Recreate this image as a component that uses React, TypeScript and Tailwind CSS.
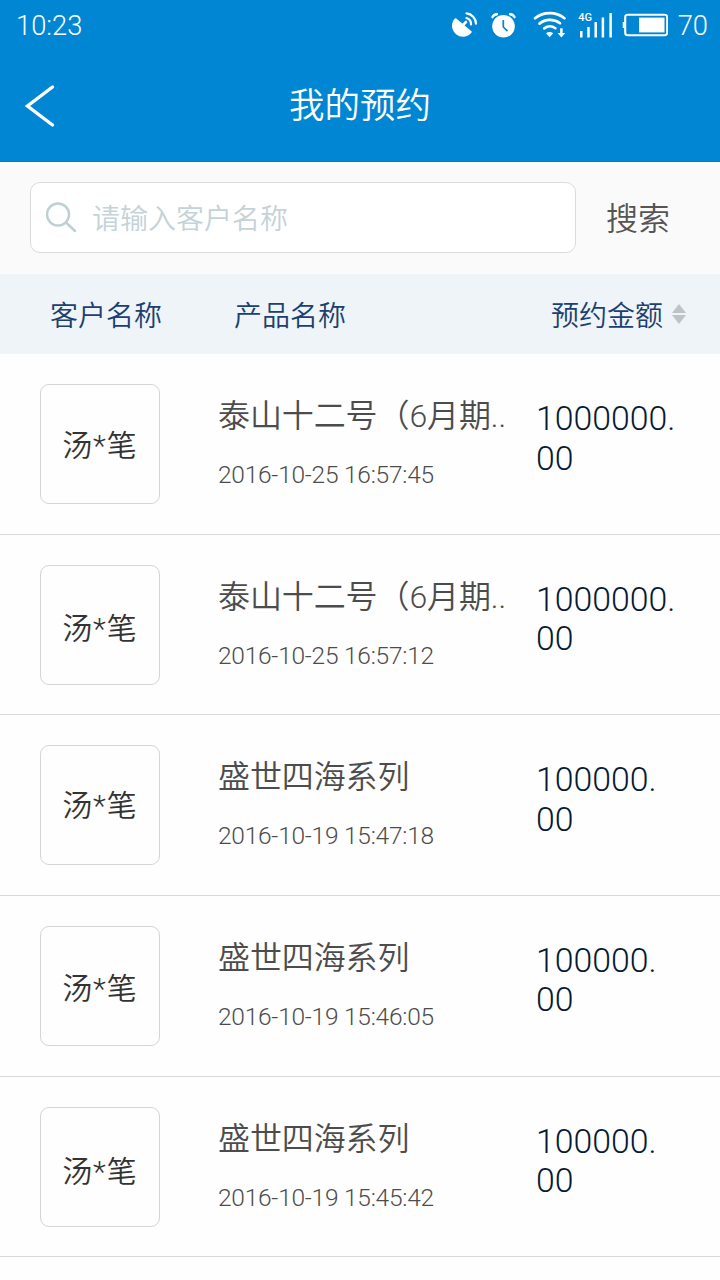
import clsx from "clsx";

interface Booking {
  customer: string;
  product: string;
  time: string;
  amount: [string, string];
  nameShift: string;
}

const bookings: Booking[] = [
  { customer: "汤*笔", product: "泰山十二号（6月期..", time: "2016-10-25 16:57:45", amount: ["1000000.", "00"], nameShift: "pt-0.5" },
  { customer: "汤*笔", product: "泰山十二号（6月期..", time: "2016-10-25 16:57:12", amount: ["1000000.", "00"], nameShift: "pt-[6px]" },
  { customer: "汤*笔", product: "盛世四海系列", time: "2016-10-19 15:47:18", amount: ["100000.", "00"], nameShift: "pt-0" },
  { customer: "汤*笔", product: "盛世四海系列", time: "2016-10-19 15:46:05", amount: ["100000.", "00"], nameShift: "pt-1" },
  { customer: "汤*笔", product: "盛世四海系列", time: "2016-10-19 15:45:42", amount: ["100000.", "00"], nameShift: "pt-2" },
];

function StatusIcons() {
  return (
    <svg width="218" height="32" viewBox="450 8 218 32" fill="none" stroke="white">
      {/* satellite dish */}
      <path d="M455.5 19.5 L470.5 32 A9.6 9.6 0 0 1 455.5 19.5Z" fill="white" strokeWidth="2.4" strokeLinejoin="round" />
      <path d="M462 26 L466 22" strokeWidth="2.6" strokeLinecap="round" />
      <path d="M466.5 18 A6.5 6.5 0 0 1 471 24.5" strokeWidth="2.2" strokeLinecap="round" />
      <path d="M466.5 13.4 A10.5 10.5 0 0 1 476 23.6" strokeWidth="2.2" strokeLinecap="round" />

      {/* alarm */}
      <circle cx="503.5" cy="26.2" r="11.3" fill="white" stroke="none" />
      <path d="M492.5 17.2 Q493.5 14.4 497 14.2 M510 14.2 Q513.5 14.4 514.5 17.2" strokeWidth="2.4" strokeLinecap="round" />
      <path d="M503.3 20 V27 L507.5 31.2" stroke="#0086d3" strokeWidth="1.7" />

      {/* wifi with data arrows */}
      <path d="M535 18.2 C543.5 11.3 556 11.3 564.5 18.2" strokeWidth="2.7" strokeLinecap="round" />
      <path d="M539.5 23.6 C545.5 18.6 554 18.6 560 23.2" strokeWidth="2.7" strokeLinecap="round" />
      <path d="M544.2 28.4 C547.8 25.7 551.8 25.7 555.4 28.2" strokeWidth="2.6" strokeLinecap="round" />
      <path d="M546 33.2 Q549.5 30.8 553.2 33.2 L549.6 37.3Z" fill="white" stroke="none" />
      <path d="M561.4 28.3 V35" strokeWidth="2.5" />
      <path d="M557.6 33 H565.2 L561.4 37.6Z" fill="white" stroke="none" />

      {/* signal */}
      <text x="578.3" y="21" fill="white" stroke="none" className="font-['Roboto'] text-[11px] font-medium">4G</text>
      <path d="M581.3 31 V37.5 M588.5 27 V37.5 M595.7 22 V37.5 M602.9 17.5 V37.5 M610.6 13 V37.5" strokeWidth="2.5" />

      {/* battery */}
      <rect x="625.2" y="14.8" width="42" height="20.4" rx="2.5" strokeWidth="2.1" />
      <path d="M623.8 22 V28" strokeWidth="2.2" />
      <rect x="639" y="17.6" width="25.5" height="14.8" fill="white" stroke="none" />
    </svg>
  );
}

function Header() {
  return (
    <header className="h-[162px] bg-[#0086d3] border-b border-[#087bbd] text-white">
      <div className="h-[52px] flex items-start justify-between pl-4 pr-3">
        <span className="pt-2.5 text-[27.3px] leading-8 font-[350]">10:23</span>
        <div className="flex items-start">
          <div className="pt-2 mr-2.5">
            <StatusIcons />
          </div>
          <span className="pt-2.5 text-[27.3px] leading-8 font-light">70</span>
        </div>
      </div>
      <div className="h-[108px] grid grid-cols-[1fr_auto_1fr] items-center">
        <svg className="ml-6" width="32" height="44" viewBox="0 0 32 44" fill="none">
          <path d="M28.5 3 L3.5 22 L28.5 41" stroke="white" strokeWidth="3.4" strokeLinecap="round" strokeLinejoin="miter" />
        </svg>
        <h1 className="text-[35.5px] leading-10 font-[350]">我的预约</h1>
      </div>
    </header>
  );
}

function SearchBar() {
  return (
    <section className="h-[112px] bg-[#fafafa] pt-5 pl-[30px] flex items-start">
      <div className="w-[546px] h-[71px] rounded-[10px] border border-[#d9dcdd] bg-white flex items-center">
        <svg className="ml-[15px]" width="32" height="32" viewBox="0 0 32 32" fill="none" stroke="#bfd0d3" strokeWidth="2.5">
          <circle cx="12" cy="12.5" r="11" />
          <path d="M20 20.5 L29 29" strokeLinecap="round" />
        </svg>
        <span className="ml-3.5 pt-1 text-[28px] leading-10 font-[350] text-[#c5d2d7]">请输入客户名称</span>
      </div>
      <button className="ml-[30px] h-[71px] pt-[3px] text-[32px] font-[350] text-[#555]">搜索</button>
    </section>
  );
}

function ColumnHeads() {
  return (
    <section className="h-20 bg-[#eef4f7] pl-[50px] flex items-center text-[28px] leading-10 font-[350] text-[#1c406f]">
      <span className="w-[184px] pt-1.5">客户名称</span>
      <span className="w-[317px] pt-1.5">产品名称</span>
      <span className="pt-1.5">预约金额</span>
      <svg className="ml-[9px]" width="14" height="20" viewBox="0 0 14 20" fill="#bdc3c6">
        <path d="M7 0 L14 9 H0Z" />
        <path d="M0 11 H14 L7 20Z" />
      </svg>
    </section>
  );
}

function BookingRow({ booking }: { booking: Booking }) {
  return (
    <li className="h-[180.67px] border-b border-[#d9d9d9] pl-10 pt-[30px] flex items-start">
      <div className={clsx("w-[120px] h-[120px] shrink-0 rounded-[9px] border border-[#d5d5d5] flex items-center justify-center", booking.nameShift)}>
        <span className="pt-0.5 text-[30px] leading-10 tracking-[1px] font-[350] text-[#333]">{booking.customer}</span>
      </div>
      <div className="ml-[58px] w-[318px] shrink-0 text-[#4c4c4c]">
        <div className="pt-3 text-[32px] leading-10 tracking-[-0.1px] font-[350] whitespace-nowrap">{booking.product}</div>
        <div className="pt-[23px] text-[24.5px] leading-8 tracking-[-0.25px] font-[350]">{booking.time}</div>
      </div>
      <div className="pt-[15px] text-[33.8px] leading-[39.5px] font-[350] text-[#061a33]">
        <div>{booking.amount[0]}</div>
        <div>{booking.amount[1]}</div>
      </div>
    </li>
  );
}

export default function App() {
  return (
    <main className="w-[720px] h-[1280px] overflow-hidden bg-[#fefefe] font-['Roboto','Noto_Sans_CJK_SC',sans-serif]">
      <Header />
      <SearchBar />
      <ColumnHeads />
      <ul>
        {bookings.map((booking) => (
          <BookingRow key={booking.time} booking={booking} />
        ))}
      </ul>
    </main>
  );
}
